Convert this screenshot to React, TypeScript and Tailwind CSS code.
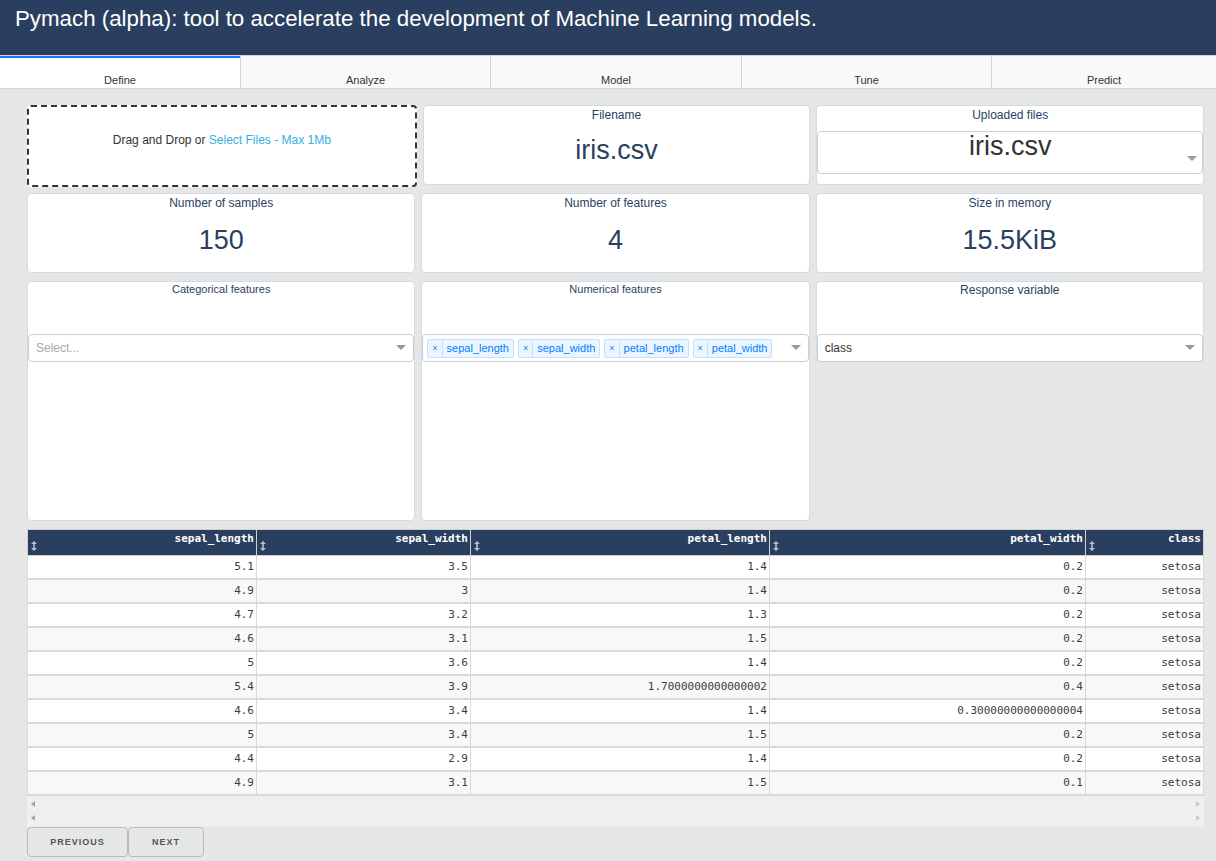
import React from "react";

const rows = [
  ["5.1", "3.5", "1.4", "0.2", "setosa"],
  ["4.9", "3", "1.4", "0.2", "setosa"],
  ["4.7", "3.2", "1.3", "0.2", "setosa"],
  ["4.6", "3.1", "1.5", "0.2", "setosa"],
  ["5", "3.6", "1.4", "0.2", "setosa"],
  ["5.4", "3.9", "1.7000000000000002", "0.4", "setosa"],
  ["4.6", "3.4", "1.4", "0.30000000000000004", "setosa"],
  ["5", "3.4", "1.5", "0.2", "setosa"],
  ["4.4", "2.9", "1.4", "0.2", "setosa"],
  ["4.9", "3.1", "1.5", "0.1", "setosa"],
];

const cols = [
  { name: "sepal_length", w: "w-[228px]" },
  { name: "sepal_width", w: "w-[214px]" },
  { name: "petal_length", w: "w-[299px]" },
  { name: "petal_width", w: "w-[316px]" },
  { name: "class", w: "flex-1" },
];

const tabs = [
  { name: "Define", w: "w-[240px]" },
  { name: "Analyze", w: "w-[250px]" },
  { name: "Model", w: "w-[251px]" },
  { name: "Tune", w: "w-[250px]" },
  { name: "Predict", w: "flex-1" },
];

function Caret() {
  return (
    <svg width="10" height="6" viewBox="0 0 10 6" className="shrink-0">
      <path d="M0 0 L10 0 L5 5 Z" fill="#999" />
    </svg>
  );
}

function SortIcon() {
  return (
    <svg width="6" height="10" viewBox="0 0 6 10" className="shrink-0">
      <path d="M3 0 L6 3 L0 3 Z M0 7 L6 7 L3 10 Z M2.2 3 H3.8 V7 H2.2 Z" fill="#b7c0cf" />
    </svg>
  );
}

function Card({ title, children, className = "" }: { title: string; children?: React.ReactNode; className?: string }) {
  return (
    <div className={`flex-1 bg-white border border-[#d3dbe6] rounded-[4px] flex flex-col ${className}`}>
      <div className="text-center text-[12px] text-[#2a3f5f] leading-[16px]">{title}</div>
      {children}
    </div>
  );
}

function Chip({ label }: { label: string }) {
  return (
    <div className="flex items-stretch h-[19px] border border-[#c2e0ff] bg-[#ebf5ff] rounded-[2px] text-[#007eff] text-[11px] leading-[17px] mr-[4px]">
      <span className="px-[4px] border-r border-[#c2e0ff] text-[9px]">×</span>
      <span className="px-[4px]">{label}</span>
    </div>
  );
}

export default function App() {
  return (
    <div className="w-[1216px] h-[861px] bg-[#e5e7e6] overflow-hidden" style={{ fontFamily: "'Liberation Sans', Arial, sans-serif" }}>
      <div className="h-[55px] bg-[#2a3f5f] px-[15px] pt-[6px]">
        <h1 className="text-white text-[22.3px] leading-[26px]">
          Pymach (alpha): tool to accelerate the development of Machine Learning models.
        </h1>
      </div>
      <div className="flex h-[34px] bg-[#e5e7e6] border-t border-[#d6d6d6]">
        {tabs.map((t, i) => (
          <div
            key={t.name}
            className={`${t.w} flex items-end justify-center text-[11px] text-[#333] border-b border-[#d6d6d6] ${
              i === 0
                ? "bg-white border-t-2 border-t-[#1975fa]"
                : "bg-[#f9f9f9] border-l border-[#d6d6d6]"
            }`}
          >
            {t.name}
          </div>
        ))}
      </div>

      <div className="px-[27px] pt-[16px] pr-[12px]">
        <div className="flex gap-[6px] items-start">
          <div className="flex-1 h-[82px] border-2 border-dashed border-[#333] rounded-[4px] bg-white flex justify-center pt-[24px] text-[12px] text-[#333]">
            <span>
              Drag and Drop or <span className="text-[#33b0e0]">Select Files - Max 1Mb</span>
            </span>
          </div>
          <Card title="Filename" className="h-[80px] pt-[1px]">
            <div className="text-center text-[27px] text-[#2a3f5f] mt-[7px]">iris.csv</div>
          </Card>
          <Card title="Uploaded files" className="h-[80px] pt-[1px]">
            <div className="mt-[8px] h-[43px] border border-[#ccc] rounded-[4px] relative">
              <div className="text-center text-[27px] text-[#333] leading-[28px]">iris.csv</div>
              <div className="absolute right-[5px] top-[24px]">
                <Caret />
              </div>
            </div>
          </Card>
        </div>

        <div className="flex gap-[6px] h-[80px] mt-[6px]">
          <Card title="Number of samples" className="pt-[1px]">
            <div className="text-center text-[27px] text-[#2a3f5f] mt-[9px]">150</div>
          </Card>
          <Card title="Number of features" className="pt-[1px]">
            <div className="text-center text-[27px] text-[#2a3f5f] mt-[9px]">4</div>
          </Card>
          <Card title="Size in memory" className="pt-[1px]">
            <div className="text-center text-[27px] text-[#2a3f5f] mt-[9px]">15.5KiB</div>
          </Card>
        </div>

        <div className="flex gap-[6px] items-start mt-[8px]">
          <div className="flex-1 h-[240px] bg-white border border-[#d3dbe6] rounded-[4px]">
            <div className="text-center text-[11px] text-[#2a3f5f] leading-[14px]">Categorical features</div>
            <div className="mt-[38px] h-[28px] border border-[#ccc] rounded-[4px] flex items-center justify-between px-[7px]">
              <span className="text-[12px] text-[#aaa]">Select...</span>
              <Caret />
            </div>
          </div>
          <div className="flex-1 h-[240px] bg-white border border-[#d3dbe6] rounded-[4px]">
            <div className="text-center text-[11px] text-[#2a3f5f] leading-[14px]">Numerical features</div>
            <div className="mt-[38px] h-[28px] border border-[#ccc] rounded-[4px] flex items-center justify-between pl-[4px] pr-[7px]">
              <div className="flex">
                <Chip label="sepal_length" />
                <Chip label="sepal_width" />
                <Chip label="petal_length" />
                <Chip label="petal_width" />
              </div>
              <Caret />
            </div>
          </div>
          <div className="flex-1 h-[81px] bg-white border border-[#d3dbe6] rounded-[4px]">
            <div className="text-center text-[12px] text-[#2a3f5f] leading-[16px]">Response variable</div>
            <div className="mt-[36px] h-[28px] border border-[#ccc] rounded-[4px] flex items-center justify-between px-[7px]">
              <span className="text-[12px] text-[#333]">class</span>
              <Caret />
            </div>
          </div>
        </div>

        <div className="mt-[8px] text-[11px]" style={{ fontFamily: "'DejaVu Sans Mono', monospace" }}>
          <div className="flex h-[27px] bg-[#2a3f5f] border border-[#d0d0d0] text-white font-bold">
            {cols.map((c, i) => (
              <div key={c.name} className={`${c.w} flex justify-between pl-[3px] pr-[2px] ${i > 0 ? "border-l border-[#d0d0d0]" : ""}`}>
                <div className="pt-[11px]">
                  <SortIcon />
                </div>
                <span className="leading-[14px] pt-[2px]">{c.name}</span>
              </div>
            ))}
          </div>
          {rows.map((r, ri) => (
            <div
              key={ri}
              className={`flex h-[24px] border-b-2 border-x border-[#d9d9d9] text-[#3c3c3c] ${ri % 2 === 0 ? "bg-white" : "bg-[#f8f8f8]"}`}
            >
              {r.map((v, ci) => (
                <div key={ci} className={`${cols[ci].w} text-right pr-[2px] leading-[22px] ${ci > 0 ? "border-l border-[#d9d9d9]" : ""}`}>
                  {v}
                </div>
              ))}
            </div>
          ))}
          <div className="h-[31px] bg-[#efefef] flex justify-between px-[4px]">
            <div className="flex flex-col gap-[8px] pt-[5px]">
              <svg width="4" height="6" viewBox="0 0 4 6"><path d="M4 0 V6 L0 3 Z" fill="#a3a3a3" /></svg>
              <svg width="4" height="6" viewBox="0 0 4 6"><path d="M4 0 V6 L0 3 Z" fill="#a3a3a3" /></svg>
            </div>
            <div className="flex flex-col gap-[8px] pt-[5px]">
              <svg width="4" height="6" viewBox="0 0 4 6"><path d="M0 0 V6 L4 3 Z" fill="#c8c8c8" /></svg>
              <svg width="4" height="6" viewBox="0 0 4 6"><path d="M0 0 V6 L4 3 Z" fill="#c8c8c8" /></svg>
            </div>
          </div>
        </div>

        <div className="flex">
          <button className="w-[101px] h-[30px] border border-[#bbb] rounded-[4px] bg-transparent text-[9px] font-bold tracking-[1px] text-[#555] pt-[2px]">
            PREVIOUS
          </button>
          <button className="w-[76px] h-[30px] border border-[#bbb] rounded-[4px] bg-transparent text-[9px] font-bold tracking-[1px] text-[#555] pt-[2px]">
            NEXT
          </button>
        </div>
      </div>
    </div>
  );
}
